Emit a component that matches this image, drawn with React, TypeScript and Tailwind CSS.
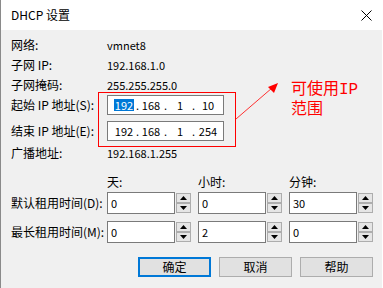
import React from 'react';

const FONT = { fontFamily: '"Segoe UI", "Noto Sans CJK SC", "Noto Sans", sans-serif' };

const IpBox = ({ parts, selectFirst }: { parts: string[]; selectFirst?: boolean }) => {
  const widths = ['w-[24px]', 'w-[24px]', 'w-[24px]', 'w-[26px]'];
  const dots = ['w-[3px]', 'w-[5px]', 'w-[3px]'];
  return (
    <div className="flex items-center w-[117px] h-[20px] border border-[#7a7a7a] bg-white pl-[4px] text-[11px] text-black">
      {parts.map((p, i) => (
        <React.Fragment key={i}>
          <div className={`${widths[i]} flex justify-center`}>
            {i === 0 && selectFirst ? (
              <span className="bg-[#0078d7] text-white leading-[12px] px-[1px]">{p}</span>
            ) : (
              <span>{p}</span>
            )}
          </div>
          {i < 3 && <div className={`${dots[i]} flex justify-center`}>.</div>}
        </React.Fragment>
      ))}
    </div>
  );
};

const Spin = ({ value }: { value: string }) => (
  <div className="flex w-[84px] h-[22px]">
    <div className="w-[68px] h-full border border-[#7a7a7a] bg-white pl-[3px] flex items-center text-[11px] text-black">
      {value}
    </div>
    <div className="w-[16px] h-full flex flex-col justify-between py-[1px] pl-[1px]">
      <div className="h-[10px] border border-[#adadad] bg-[#e5e5e5] flex items-center justify-center">
        <svg width="7" height="4" viewBox="0 0 7 4"><path d="M0 4 L3.5 0 L7 4 Z" fill="#000" /></svg>
      </div>
      <div className="h-[10px] border border-[#adadad] bg-[#e5e5e5] flex items-center justify-center">
        <svg width="7" height="4" viewBox="0 0 7 4"><path d="M0 0 L3.5 4 L7 0 Z" fill="#000" /></svg>
      </div>
    </div>
  </div>
);

const Row = ({ label, children, h = 'h-[20px]' }: { label: string; children: React.ReactNode; h?: string }) => (
  <div className={`flex items-center ${h}`}>
    <div className="w-[96px] text-[12px] text-black whitespace-nowrap">{label}</div>
    {children}
  </div>
);

export default function App() {
  return (
    <div className="relative w-[383px] h-[288px] bg-[#f0f0f0] border-l border-[#8a8a8a] border-r border-r-white overflow-hidden" style={FONT}>
      {/* title bar */}
      <div className="h-[30px] bg-white flex items-center justify-between pl-[10px] pr-[9px]">
        <span className="text-[12px] text-black">DHCP 设置</span>
        <svg width="11" height="11" viewBox="0 0 11 11" className="mr-[1px]">
          <path d="M0.5 0.5 L10.5 10.5 M10.5 0.5 L0.5 10.5" stroke="#000" strokeWidth="1" />
        </svg>
      </div>

      <div className="pl-[10px] pt-[5px] flex flex-col">
        <Row label="网络:"><span className="text-[11px]">vmnet8</span></Row>
        <Row label="子网 IP:"><span className="text-[11px]">192.168.1.0</span></Row>
        <Row label="子网掩码:"><span className="text-[11px]">255.255.255.0</span></Row>
        <div className="flex flex-col gap-[6px]">
          <Row label="起始 IP 地址(S):"><IpBox parts={['192', '168', '1', '10']} selectFirst /></Row>
          <Row label="结束 IP 地址(E):"><IpBox parts={['192', '168', '1', '254']} /></Row>
        </div>
        <div className="mt-[2px]">
          <Row label="广播地址:"><span className="text-[11px]">192.168.1.255</span></Row>
        </div>
        <div className="mt-[9px]">
          <Row label="">
            <div className="flex gap-[7px] text-[12px]">
              <span className="w-[84px]">天:</span>
              <span className="w-[84px]">小时:</span>
              <span className="w-[84px]">分钟:</span>
            </div>
          </Row>
        </div>
        <div className="flex flex-col gap-[7px]">
          <Row label="默认租用时间(D):" h="h-[22px]">
            <div className="flex gap-[7px]"><Spin value="0" /><Spin value="0" /><Spin value="30" /></div>
          </Row>
          <Row label="最长租用时间(M):" h="h-[22px]">
            <div className="flex gap-[7px]"><Spin value="0" /><Spin value="2" /><Spin value="0" /></div>
          </Row>
        </div>
        <div className="mt-[14px] flex justify-end gap-[8px] pr-[9px] text-[12px]">
          <button className="w-[73px] h-[20px] border-2 border-[#0078d7] bg-[#e1e1e1] flex items-center justify-center">确定</button>
          <button className="w-[73px] h-[20px] border border-[#adadad] bg-[#e1e1e1] flex items-center justify-center">取消</button>
          <button className="w-[73px] h-[20px] border border-[#adadad] bg-[#e1e1e1] flex items-center justify-center">帮助</button>
        </div>
      </div>

      {/* annotation */}
      <div className="absolute left-[97px] top-[92px] w-[138px] h-[55px] border border-[#ff0000]" />
      <svg className="absolute left-[234px] top-[80px]" width="46" height="42" viewBox="0 0 46 42">
        <path d="M1 39 L37 8" stroke="#ff3030" strokeWidth="1" fill="none" />
        <path d="M43 3 L33 7 L39 13 Z" fill="#ff0000" />
      </svg>
      <div className="absolute left-[290px] top-[79px] text-[16px] leading-[17px] text-[#ff0000]" style={{ fontFamily: '"Noto Sans CJK SC", sans-serif' }}>
        <div>可使用<span style={{ fontFamily: '"Liberation Mono", monospace' }}>IP</span></div>
        <div>范围</div>
      </div>
    </div>
  );
}
